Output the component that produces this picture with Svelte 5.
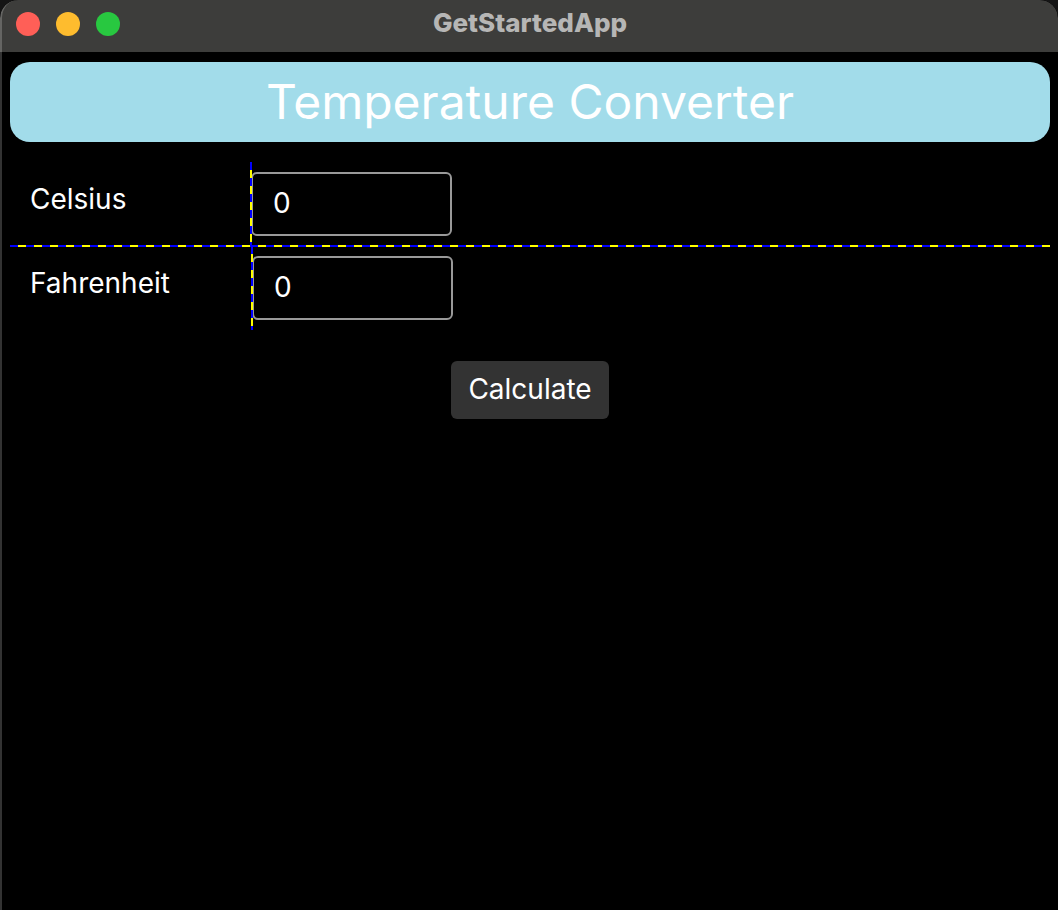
<script>
  let celsius = $state('0');
  let fahrenheit = $state('0');

  function calculate() {
    const value = Number(celsius);
    fahrenheit = Number.isFinite(value) ? String(value * 9 / 5 + 32) : '0';
  }
</script>

<div class="window">
  <header class="titlebar">
    <div class="lights">
      <button class="light close" aria-label="Close"></button>
      <button class="light minimize" aria-label="Minimize"></button>
      <button class="light zoom" aria-label="Zoom"></button>
    </div>
    <span class="name">GetStartedApp</span>
  </header>

  <main>
    <h1>Temperature Converter</h1>

    <div class="fields">
      <div class="row">
        <label for="celsius">Celsius</label>
        <div class="cell"><input id="celsius" type="text" bind:value={celsius} /></div>
      </div>
      <div class="row second">
        <label for="fahrenheit">Fahrenheit</label>
        <div class="cell"><input id="fahrenheit" type="text" bind:value={fahrenheit} /></div>
      </div>
    </div>

    <button class="calculate" onclick={calculate}>Calculate</button>
  </main>
</div>

<style>
  :global(body) {
    margin: 0;
    background: #151515;
  }

  .window {
    box-sizing: border-box;
    display: flex;
    flex-direction: column;
    min-height: 100vh;
    overflow: hidden;
    border-radius: 18px 18px 0 0;
    background: #000;
    color: #fff;
    font-family: Inter, sans-serif;
    font-size: 28px;
    font-weight: 400;
    line-height: 34px;
  }

  .titlebar {
    box-sizing: border-box;
    display: grid;
    grid-template-columns: 1fr auto 1fr;
    align-items: center;
    height: 52px;
    padding: 0 14px 4px;
    border-left: 2px solid #656563;
    border-radius: 18px 18px 0 0;
    background: #3d3d3b;
  }

  .lights {
    display: flex;
    gap: 16px;
  }

  .light {
    width: 24px;
    height: 24px;
    padding: 0;
    border: 0;
    border-radius: 50%;
  }

  .close { background: #ff5f57; }
  .minimize { background: #febc2e; }
  .zoom { background: #28c840; }

  .name {
    padding-bottom: 2px;
    color: #b6b6b5;
    font-size: 26px;
    font-weight: 800;
    line-height: 32px;
  }

  main {
    flex: 1;
    display: flex;
    flex-direction: column;
    padding: 10px 8px;
    border-left: 2px solid #333;
  }

  h1 {
    margin: 0;
    border-radius: 20px;
    background: #a2dcea;
    font-size: 48px;
    font-weight: 400;
    line-height: 80px;
    text-align: center;
  }

  .fields {
    margin-top: 20px;
  }

  .row {
    position: relative;
    display: grid;
    grid-template-columns: 241px 1fr;
    height: 84px;
  }

  .second {
    grid-template-columns: 242px 1fr;
  }

  .second::before {
    content: '';
    position: absolute;
    top: -1px;
    left: 0;
    right: 0;
    height: 2px;
    background: repeating-linear-gradient(to right, #00f 0 8px, #ff0 8px 16px);
  }

  label {
    padding: 20px;
  }

  .cell {
    position: relative;
    padding: 10px 0;
  }

  .cell::before {
    content: '';
    position: absolute;
    top: 0;
    bottom: 0;
    left: -1px;
    width: 2px;
    background: repeating-linear-gradient(to bottom, #00f 0 8px, #ff0 8px 16px);
  }

  input {
    box-sizing: border-box;
    display: block;
    width: 201px;
    height: 64px;
    padding: 0 20px 2px;
    border: 2px solid #999;
    border-radius: 6px;
    background: transparent;
    color: inherit;
    font: inherit;
  }

  .calculate {
    align-self: center;
    margin-top: 31px;
    padding: 11px 17px 13px;
    border: 0;
    border-radius: 6px;
    background: #333;
    color: inherit;
    font: inherit;
  }
</style>
